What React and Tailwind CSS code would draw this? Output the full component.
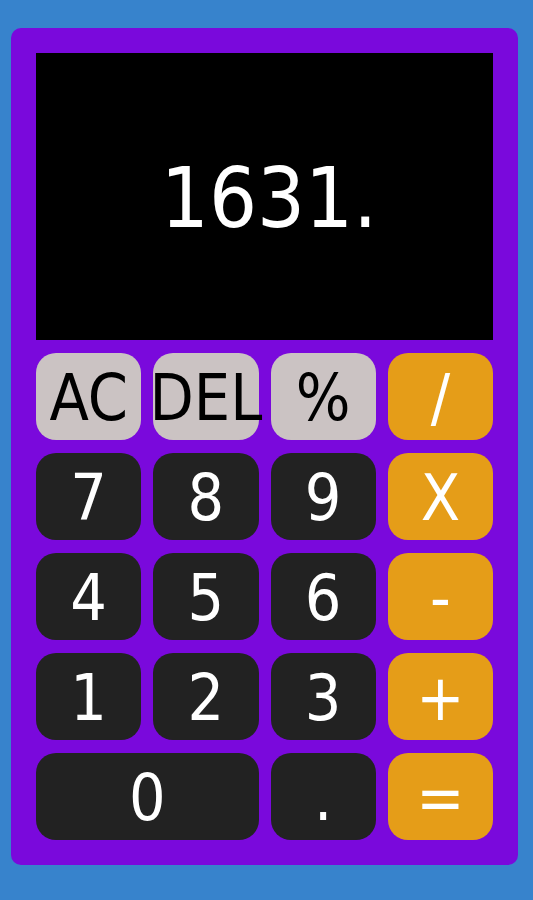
const rows = [
  [
    { label: "AC", kind: "fn" },
    { label: "DEL", kind: "fn" },
    { label: "%", kind: "fn" },
    { label: "/", kind: "op" },
  ],
  [
    { label: "7" },
    { label: "8" },
    { label: "9" },
    { label: "X", kind: "op" },
  ],
  [
    { label: "4" },
    { label: "5" },
    { label: "6" },
    { label: "-", kind: "op" },
  ],
  [
    { label: "1" },
    { label: "2" },
    { label: "3" },
    { label: "+", kind: "op" },
  ],
  [
    { label: "0", wide: true },
    { label: "." },
    { label: "=", kind: "op" },
  ],
];

const kindClass = {
  fn: "bg-[#cbc3c3] text-black",
  op: "bg-[#e59d18] text-white",
  num: "bg-[#222222] text-white",
};

function Key({ label, kind = "num", wide }) {
  return (
    <button
      className={`flex h-[87px] items-center justify-center whitespace-nowrap rounded-[20px] pt-[3px] text-[64px] leading-none ${
        kindClass[kind]
      } ${wide ? "col-span-2" : ""}`}
    >
      {label}
    </button>
  );
}

export default function App() {
  return (
    <div
      className="min-h-screen bg-[#3783cc] pl-[11px] pr-[15px] pt-[28px] pb-[35px]"
      style={{ fontFamily: '"DejaVu Sans Condensed", "DejaVu Sans", sans-serif' }}
    >
      <div className="rounded-[10px] bg-[#7a09dc] p-[25px]">
        <div className="flex h-[287px] items-center justify-center bg-black pl-[9px] pt-[2px] text-[84px] leading-none text-white">
          1631.
        </div>
        <div className="mt-[13px] grid grid-cols-4 gap-x-3 gap-y-[13px]">
          {rows.flat().map((k) => (
            <Key key={k.label} {...k} />
          ))}
        </div>
      </div>
    </div>
  );
}
